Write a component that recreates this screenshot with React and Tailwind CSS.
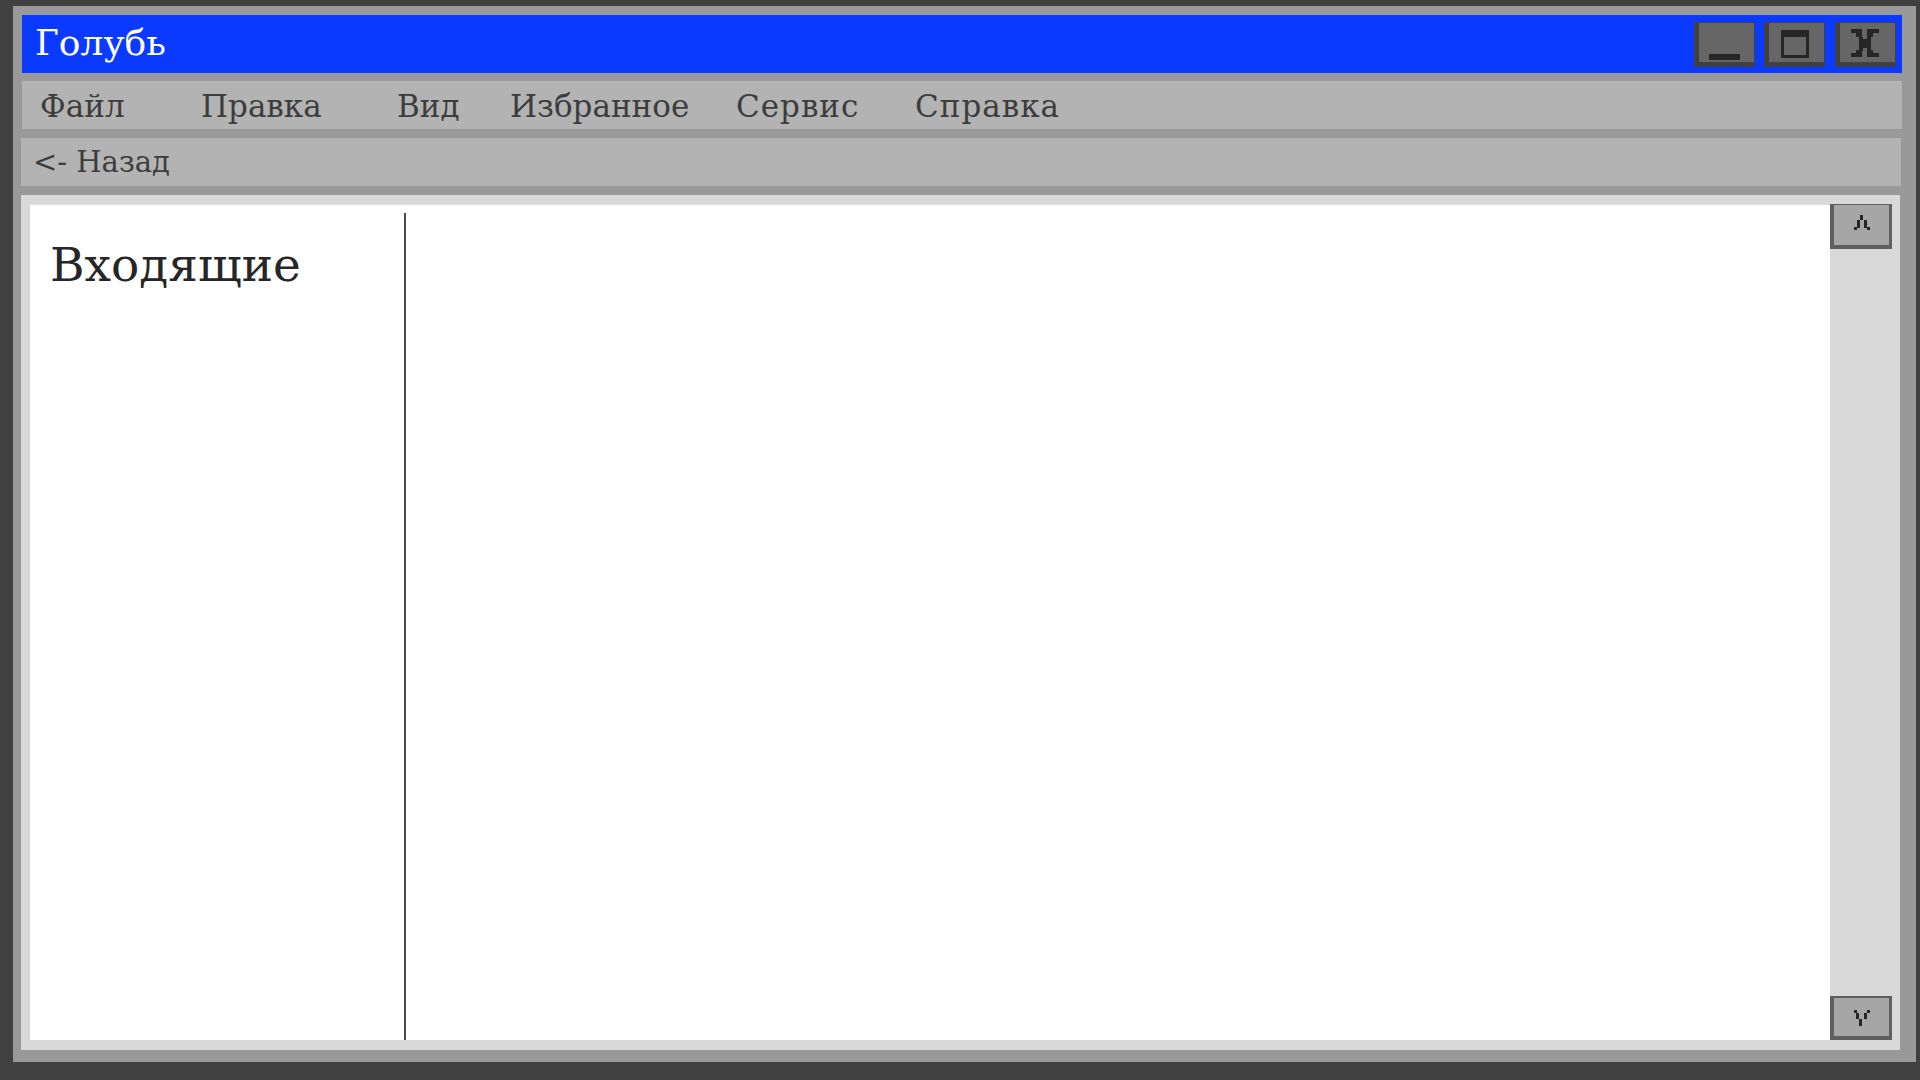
import React from 'react';

const menu = [
    { name: "Файл", cls: "w-[161px]" },
    { name: "Правка", cls: "w-[196px]" },
    { name: "Вид", cls: "w-[113px]" },
    { name: "Избранное", cls: "w-[226px]" },
    { name: "Сервис", cls: "w-[179px] tracking-[1px]" },
    { name: "Справка", cls: "w-[179px] tracking-[1px]" },
];

const font = { fontFamily: '"DejaVu Serif", "Liberation Serif", serif' };

// pixel glyphs for the window buttons
const MinGlyph = () => (
    <svg width="50" height="39" shapeRendering="crispEdges">
        <rect x="10" y="31" width="31" height="6" fill="#262626" />
    </svg>
);

const MaxGlyph = () => (
    <svg width="50" height="39" shapeRendering="crispEdges">
        <rect x="12" y="7" width="28" height="7" fill="#262626" />
        <rect x="12" y="7" width="3" height="28" fill="#262626" />
        <rect x="37" y="7" width="3" height="28" fill="#262626" />
        <rect x="12" y="32" width="28" height="3" fill="#262626" />
    </svg>
);

const CloseGlyph = () => (
    <svg width="50" height="39" shapeRendering="crispEdges">
        <g transform="translate(11 6)" fill="#262626">
            <rect x="0" y="0" width="11" height="4" />
            <rect x="16" y="0" width="12" height="4" />
            <rect x="5" y="4" width="6" height="4" />
            <rect x="16" y="4" width="6" height="4" />
            <rect x="8" y="8" width="4" height="3" />
            <rect x="16" y="8" width="4" height="3" />
            <rect x="8" y="10" width="12" height="9" />
            <rect x="8" y="19" width="4" height="3" />
            <rect x="16" y="19" width="4" height="3" />
            <rect x="5" y="21" width="6" height="3" />
            <rect x="16" y="21" width="6" height="3" />
            <rect x="0" y="24" width="11" height="4" />
            <rect x="16" y="24" width="12" height="4" />
        </g>
    </svg>
);

const UpGlyph = () => (
    <svg width="55" height="40" shapeRendering="crispEdges">
        <g fill="#262626">
            <rect x="26" y="10" width="3" height="5" />
            <rect x="23" y="15" width="3" height="8" />
            <rect x="30" y="15" width="3" height="8" />
            <rect x="20" y="22" width="3" height="3" />
            <rect x="33" y="22" width="3" height="3" />
        </g>
    </svg>
);

const DownGlyph = () => (
    <svg width="55" height="38" shapeRendering="crispEdges">
        <g fill="#262626">
            <rect x="20" y="12" width="3" height="3" />
            <rect x="33" y="12" width="3" height="3" />
            <rect x="22" y="15" width="3" height="6" />
            <rect x="30" y="15" width="3" height="6" />
            <rect x="25" y="21" width="3" height="7" />
        </g>
    </svg>
);

const TitleButton = ({ children }) => (
    <div className="w-[61px] h-[45px] bg-[#666666] border-[#404040] border-l-[5px] border-b-[5px] border-t border-r">
        {children}
    </div>
);

export default function App() {
    return (
        <div className="w-[1920px] h-[1080px] bg-[#404040] overflow-hidden" style={font}>
            <div className="ml-[13px] mt-[6px] w-[1903px] h-[1056px] bg-[#999999] pt-[9px] pl-[8px] pr-[14px] pb-[12px] flex flex-col">

                {/* title bar */}
                <div className="ml-[1px] h-[58px] bg-[#0a3aff] flex items-center justify-between pl-[13px] pr-[6px]">
                    <span className="text-[36px] leading-none text-white -mt-[2px]">Голубь</span>
                    <div className="flex gap-[9px]">
                        <TitleButton><MinGlyph /></TitleButton>
                        <TitleButton><MaxGlyph /></TitleButton>
                        <div className="ml-[1px]"><TitleButton><CloseGlyph /></TitleButton></div>
                    </div>
                </div>

                {/* menu bar */}
                <div className="ml-[1px] mt-[8px] h-[48px] bg-[#b3b3b3] flex items-center pl-[18px] pt-[3px]">
                    {menu.map((item, i) => (
                        <span key={i} className={`${item.cls} text-[31px] leading-none text-[#3d3d3d]`}>{item.name}</span>
                    ))}
                </div>

                {/* back bar */}
                <div className="mt-[9px] mr-[1px] h-[48px] bg-[#b3b3b3] flex items-center pl-[12px]">
                    <span className="text-[29px] leading-none text-[#3d3d3d] whitespace-pre">{"<- Назад"}</span>
                </div>

                {/* content */}
                <div className="mt-[9px] mr-[2px] flex-1 bg-[#d9d9d9] pl-[9px] pt-[10px] pb-[10px] pr-[8px] flex">
                    <div className="flex-1 bg-white flex">
                        <div className="w-[376px] mt-[8px] border-r-2 border-[#4a4a4a] pl-[20px] pt-[28px]">
                            <div className="text-[47px] leading-none text-[#262626]">Входящие</div>
                        </div>
                    </div>
                    <div className="w-[62px] -mt-[1px] flex flex-col justify-between">
                        <div className="h-[45px] bg-[#a6a6a6] border-[#5f5f5f] border-l-4 border-t border-r-[3px] border-b-4">
                            <UpGlyph />
                        </div>
                        <div className="h-[44px] bg-[#a6a6a6] border-[#5f5f5f] border-l-4 border-t-2 border-r-[3px] border-b-4">
                            <DownGlyph />
                        </div>
                    </div>
                </div>

            </div>
        </div>
    );
}
